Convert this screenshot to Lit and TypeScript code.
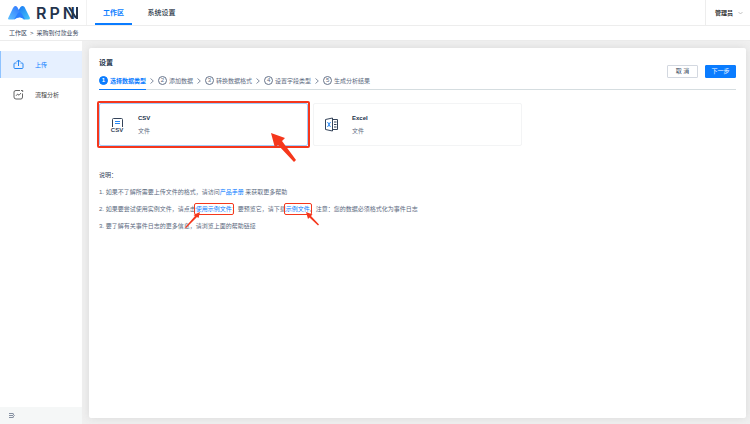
import { LitElement, html, css, svg } from "lit";
import { customElement, state } from "lit/decorators.js";

const STEPS = ["选择数据类型", "添加数据", "转换数据格式", "设置字段类型", "生成分析结果"];

@customElement("app-root")
export class AppRoot extends LitElement {
  @state() private selected = "csv";

  static styles = css`
    :host {
      display: flex;
      flex-direction: column;
      min-height: 100vh;
      background: #f0f0f0;
      color: #5c6a80;
      font: 6px/12px "Liberation Sans", "Noto Sans CJK SC", sans-serif;
    }
    * { box-sizing: border-box; }
    a { color: inherit; text-decoration: none; }
    svg { display: block; flex: none; }
    button { font: inherit; cursor: pointer; }
    .header {
      display: flex;
      height: 26px;
      background: #fff;
      border-bottom: 1px solid #ededed;
    }
    .brand {
      display: flex;
      align-items: center;
      gap: 6px;
      width: 87px;
      padding-left: 8px;
      border-right: 1px solid #f2f2f2;
    }
    .word {
      display: flex;
      align-items: center;
      gap: 3px;
      font: 600 16px/16px Inter, sans-serif;
      color: #24344d;
    }
    .word svg { margin-left: -11px; }
    .tabs { display: flex; flex: 1; padding-left: 8px; gap: 8px; }
    .tab {
      width: 37px;
      font-size: 7px;
      line-height: 25px;
      text-align: center;
      font-weight: 500;
      color: #303c4d;
      white-space: nowrap;
    }
    .tab.wide { width: 43px; }
    .tab.on { color: #0a7cff; border-bottom: 2px solid #0a7cff; font-weight: bold; }
    .user {
      display: flex;
      align-items: center;
      gap: 5px;
      padding: 0 7px 0 9px;
      border: 0;
      border-left: 1px solid #ededed;
      background: none;
      color: #303030;
      font-weight: bold;
    }
    .crumbs {
      display: flex;
      gap: 3px;
      padding: 1px 9px;
      height: 15px;
      background: #fff;
      border-bottom: 1px solid #ececec;
      color: #35445a;
    }
    .body { display: flex; flex: 1; }
    .side {
      display: flex;
      flex-direction: column;
      width: 82px;
      background: #fff;
    }
    .menu { display: flex; flex-direction: column; gap: 3px; flex: 1; padding-top: 10px; }
    .item {
      display: flex;
      align-items: center;
      gap: 11px;
      height: 27px;
      padding-left: 12px;
      border-left: 1px solid transparent;
      color: #444;
    }
    .item.on { background: #e6f0ff; color: #0a7cff; border-color: #8fc3ff; }
    .fold { height: 17px; padding: 0 8px; border: 0; background: #f5f7f7; }
    .main { display: flex; flex: 1; padding: 7px 4px 6px 7px; }
    .panel {
      flex: 1;
      padding: 9px 10px;
      background: #fff;
      border-radius: 2px;
      box-shadow: 0 0 8px #d8d8d8;
    }
    .top { display: flex; justify-content: space-between; border-bottom: 1px solid #d5dde0; }
    .title { margin: 0; font-size: 7px; line-height: 12px; color: #22324a; }
    .steps { display: flex; gap: 4px; margin: 5px 0 0; padding: 0; list-style: none; }
    .step {
      display: flex;
      align-items: center;
      gap: 2px;
      height: 16px;
      margin-bottom: -1px;
      padding-bottom: 2px;
      border-bottom: 1px solid transparent;
      white-space: nowrap;
    }
    .step.on { color: #0a7cff; font-weight: bold; border-color: #0a7cff; }
    .num {
      width: 9px;
      height: 9px;
      border: 1px solid #66738a;
      border-radius: 50%;
      line-height: 7px;
      text-align: center;
    }
    .on .num { background: #0a7cff; border-color: #0a7cff; color: #fff; }
    .actions { display: flex; gap: 7px; padding-top: 8px; }
    .btn {
      width: 31px;
      height: 13px;
      padding: 0;
      line-height: 11px;
      border: 1px solid #d3d8e0;
      border-radius: 1px;
      background: #fff;
      color: #35445a;
    }
    .btn.main-btn { background: #0a7cff; border-color: #0a7cff; color: #fff; }
    .cards { display: grid; grid-template-columns: repeat(3, 1fr); gap: 5px; margin-top: 13px; }
    .card {
      position: relative;
      display: flex;
      align-items: center;
      gap: 13px;
      height: 43px;
      padding: 0 10px;
      border: 1px solid #f3f4f5;
      border-radius: 2px;
      background: #fff;
      color: #5c6a80;
      text-align: left;
    }
    .card.on { border-color: #a3ccfa; }
    .kind b { display: block; margin-bottom: 1px; color: #22324a; }
    .kind span { display: block; }
    .notes { margin-top: 23px; }
    .notes p { margin: 0 0 5px; }
    .notes .lead { color: #35445a; }
    .link { position: relative; color: #0a7cff; }
    .mark {
      position: absolute;
      inset: -3px;
      border: 2px solid #f5371c;
      border-radius: 2px;
      pointer-events: none;
    }
    .mark.thin { inset: -3px -2px; border-width: 1px; }
    .arrow { position: absolute; overflow: visible; pointer-events: none; }
    .arrow.big { top: 29px; right: 10px; }
    .arrow.left { top: 6px; left: -11px; }
    .arrow.right { top: 6px; left: 19px; }
  `;

  private logo() {
    return html`<svg width="22" height="15" viewBox="0 0 22 15" aria-hidden="true">
      <defs>
        <linearGradient id="a" x1="0" y1="1" x2="1" y2="0"><stop stop-color="#5cc0ff" /><stop offset="1" stop-color="#2f74ff" /></linearGradient>
        <linearGradient id="b" x1="0" y1="0" x2="1" y2="1"><stop stop-color="#1672f5" /><stop offset="1" stop-color="#45c8f7" /></linearGradient>
      </defs>
      <path fill="url(#b)" d="M10 6 12.500 2Q14.500 0 16.500 2L22 13Q22 14.500 20 14.500H15L9 9Z" />
      <path fill="url(#a)" d="M0 13.500 5 3Q7-.5 9.500 2.500L12 7 8 13Q7 14.500 5 14.500H1Q0 14.500 0 13.500Z" />
      <path fill="#2a80ff" d="M6 14.500 10 8Q12 6 14 9L17 14.500Q12 10.500 6 14.500Z" />
      <path fill="#fff" d="M8 14.500Q12 11 16 14.500Z" />
    </svg>`;
  }

  private upload() {
    return html`<svg width="11" height="11" viewBox="0 0 11 11" fill="none" stroke="#2788f5" aria-hidden="true">
      <path d="M3.500 4H2Q1 4 1 5V8.500Q1 9.500 2 9.500H9Q10 9.500 10 8.500V5Q10 4 9 4H7.500M5.500 7V1M3.500 3 5.500 1 7.500 3" />
    </svg>`;
  }

  private chart() {
    return html`<svg width="11" height="11" viewBox="0 0 11 11" fill="none" stroke="#555" stroke-width=".9" aria-hidden="true">
      <path d="M7 1.500H3Q1 1.500 1 3V8Q1 10 3 10H8Q9.500 10 9.500 8V4.500M3 6.800 4.700 5 6 6.300 8 4M8 1.500H9.700V3" />
    </svg>`;
  }

  private csvIcon() {
    return html`<svg width="15" height="16" viewBox="0 0 15 16" fill="none" aria-hidden="true">
      <path stroke="#35445a" d="M2.500 10V2.500Q2.500 1.500 3.500 1.500H11.500Q12.500 1.500 12.500 2.500V10" />
      <path stroke="#2788f5" d="M5 4.500H10M5 6.500H10" />
      <text x="7" y="15" text-anchor="middle" font-size="6" font-weight="bold" font-family="Liberation Sans, sans-serif" fill="#35445a">CSV</text>
    </svg>`;
  }

  private excelIcon() {
    return html`<svg width="15" height="15" viewBox="0 0 15 15" fill="none" aria-hidden="true">
      <path stroke="#35445a" d="M1.500 2.500 8.500 1V14L1.500 12.500ZM8.500 2.500H13.500V12.500H8.500M10 5H12.500M10 7.500H12.500M10 10H12.500" />
      <path stroke="#2788f5" d="M3.500 5 6.500 10M6.500 5 3.500 10" />
    </svg>`;
  }

  private smallArrow(side: "left" | "right") {
    return html`<svg class="arrow ${side}" width="16" height="16" viewBox="0 0 16 16" fill="#f5371c" aria-hidden="true">
      ${side === "left"
        ? svg`<path d="M15 0 13.500 6 12 5 1 16 0 15.500 10 4 8.500 3Z" />`
        : svg`<path d="M1 0 7.500 2.500 6 4 14 12.500 13 13.500 4.500 5.500 3 7Z" />`}
    </svg>`;
  }

  render() {
    return html`
      <header class="header">
        <div class="brand">
          ${this.logo()}
          <div class="word">
            <span>R</span><span>P</span><span>N</span>
            <svg width="12" height="12" viewBox="0 0 12 12" fill="none" stroke="#24344d" stroke-width="2" aria-hidden="true"><path d="M2 0 9 11M10 0V12" /></svg>
          </div>
        </div>
        <nav class="tabs">
          <a class="tab on" href="#work">工作区</a>
          <a class="tab wide" href="#system">系统设置</a>
        </nav>
        <button class="user">管理员
          <svg width="5" height="4" viewBox="0 0 5 4" fill="none" stroke="#aaa" stroke-width=".7"><path d="M.5 1 2.500 3 4.500 1" /></svg>
        </button>
      </header>
      <nav class="crumbs"><a href="#work">工作区</a><span>&gt;</span><a href="#p2p">采购到付款业务</a></nav>
      <div class="body">
        <aside class="side">
          <nav class="menu">
            <a class="item on" href="#upload">${this.upload()}上传</a>
            <a class="item" href="#analysis">${this.chart()}流程分析</a>
          </nav>
          <button class="fold" aria-label="收起菜单">
            <svg width="7" height="7" viewBox="0 0 7 7" fill="none" stroke="#68758a" stroke-width=".8"><path d="M1 1.500H5.500M1 3.500H5M1 5.500H5.500M5 2 6.300 3.500 5 5" /></svg>
          </button>
        </aside>
        <main class="main">
          <section class="panel">
            <div class="top">
              <div>
                <h1 class="title">设置</h1>
                <ol class="steps">
                  ${STEPS.map((s, i) => html`
                    <li class="step ${i === 0 ? "on" : ""}"><span class="num">${i + 1}</span>${s}</li>
                    ${i < STEPS.length - 1
                      ? html`<li class="step" aria-hidden="true"><svg width="4" height="6" viewBox="0 0 4 6" fill="none" stroke="#66738a" stroke-width=".8"><path d="M.5 .5 3.300 3 .5 5.500" /></svg></li>`
                      : ""}`)}
                </ol>
              </div>
              <div class="actions">
                <button class="btn">取 消</button>
                <button class="btn main-btn">下一步</button>
              </div>
            </div>
            <div class="cards">
              <button class="card ${this.selected === "csv" ? "on" : ""}" @click=${() => (this.selected = "csv")}>
                ${this.csvIcon()}
                <span class="kind"><b>CSV</b><span>文件</span></span>
                <span class="mark"></span>
                <svg class="arrow big" width="26" height="29" viewBox="0 0 26 29" fill="#f5371c" aria-hidden="true">
                  <path d="M0 0 14 5 11 8 25 27 23 29 7 12 4 15Z" />
                </svg>
              </button>
              <button class="card ${this.selected === "excel" ? "on" : ""}" @click=${() => (this.selected = "excel")}>
                ${this.excelIcon()}
                <span class="kind"><b>Excel</b><span>文件</span></span>
              </button>
            </div>
            <div class="notes">
              <p class="lead">说明：</p>
              <p>1. 如果不了解所需要上传文件的格式，请访问<a class="link" href="#manual">产品手册</a> 来获取更多帮助</p>
              <p>2. 如果要尝试使用实例文件，请点击<a class="link" href="#use">使用示例文件<span class="mark thin"></span>${this.smallArrow("left")}</a>；要预览它，请下载<a class="link" href="#sample">示例文件<span class="mark thin"></span>${this.smallArrow("right")}</a>。注意：您的数据必须格式化为事件日志</p>
              <p>3. 要了解有关事件日志的更多信息，请浏览上面的帮助链接</p>
            </div>
          </section>
        </main>
      </div>
    `;
  }
}
